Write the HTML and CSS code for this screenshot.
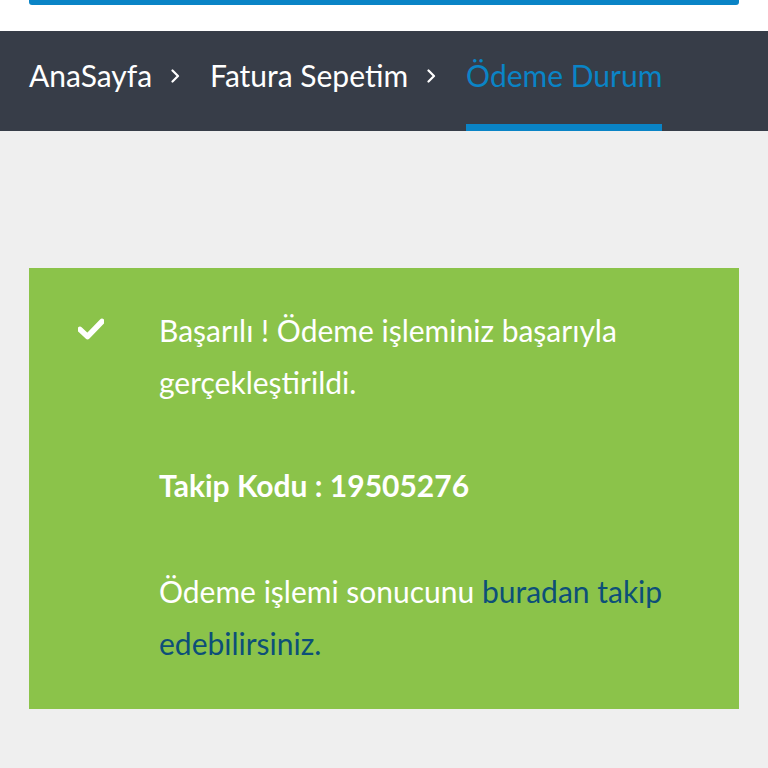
FILE: index.html
```html
<!DOCTYPE html>
<html lang="tr">
<head>
<meta charset="utf-8">
<link rel="stylesheet" href="styles.css">
</head>
<body>
<div class="top">
  <div class="topbar"></div>
</div>
<nav class="crumbs">
  <a class="crumb" href="#">AnaSayfa</a>
  <span class="sep"><svg width="9" height="14" viewBox="0 0 9 14"><path d="M1.5 1.5 L7 7 L1.5 12.5" fill="none" stroke="#fff" stroke-width="2.2" stroke-linecap="round" stroke-linejoin="round"/></svg></span>
  <a class="crumb" href="#">Fatura Sepetim</a>
  <span class="sep"><svg width="9" height="14" viewBox="0 0 9 14"><path d="M1.5 1.5 L7 7 L1.5 12.5" fill="none" stroke="#fff" stroke-width="2.2" stroke-linecap="round" stroke-linejoin="round"/></svg></span>
  <span class="crumb active">Ödeme Durum</span>
</nav>
<main class="main">
  <div class="alert">
    <div class="icon">
      <svg width="26" height="22" viewBox="0 0 26 22"><path d="M2 11.5 L9.5 18.5 L24 3.5" fill="none" stroke="#fff" stroke-width="5.5" stroke-linecap="round" stroke-linejoin="round"/></svg>
    </div>
    <div class="text">
      <p>Başarılı ! Ödeme işleminiz başarıyla gerçekleştirildi.</p>
      <p class="code">Takip Kodu : 19505276</p>
      <p>Ödeme işlemi sonucunu <a href="#" class="link">buradan takip edebilirsiniz.</a></p>
    </div>
  </div>
</main>
</body>
</html>
```
FILE: styles.css
```css
html, body { margin: 0; padding: 0; }
body {
  background: #efefef;
  font-family: Lato, "Open Sans", sans-serif;
  width: 768px;
  height: 768px;
  overflow: hidden;
}
.top {
  background: #fff;
  height: 31px;
  padding: 0 29px;
}
.topbar {
  height: 5px;
  background: #0a84c6;
  border-radius: 0 0 3px 3px;
}
.crumbs {
  background: #373d48;
  height: 100px;
  padding-left: 29px;
  display: flex;
  align-items: stretch;
  font-size: 30px;
}
.crumb {
  color: #fff;
  text-decoration: none;
  display: flex;
  align-items: center;
  padding-bottom: 12px;
  box-sizing: border-box;
}
.sep {
  display: flex;
  align-items: center;
  padding: 0 30px 10px 19px;
}
.sep svg { display: block; }
.crumb.active {
  color: #0a84c6;
  border-bottom: 7px solid #0a84c6;
  padding-bottom: 5px;
}
.main {
  padding: 137px 29px 0;
}
.alert {
  background: #8bc34a;
  display: flex;
  padding: 36px 30px 40px 49px;
  color: #fff;
}
.icon {
  width: 81px;
  flex: none;
  padding-top: 14px;
}
.text {
  font-size: 30px;
  line-height: 52px;
}
.text p { margin: 0 0 51px; }
.text p.code { margin-bottom: 54px; }
.text p:last-child { margin-bottom: 0; }
.code { font-weight: bold; }
.link { color: #0d4f78; text-decoration: none; }
```
